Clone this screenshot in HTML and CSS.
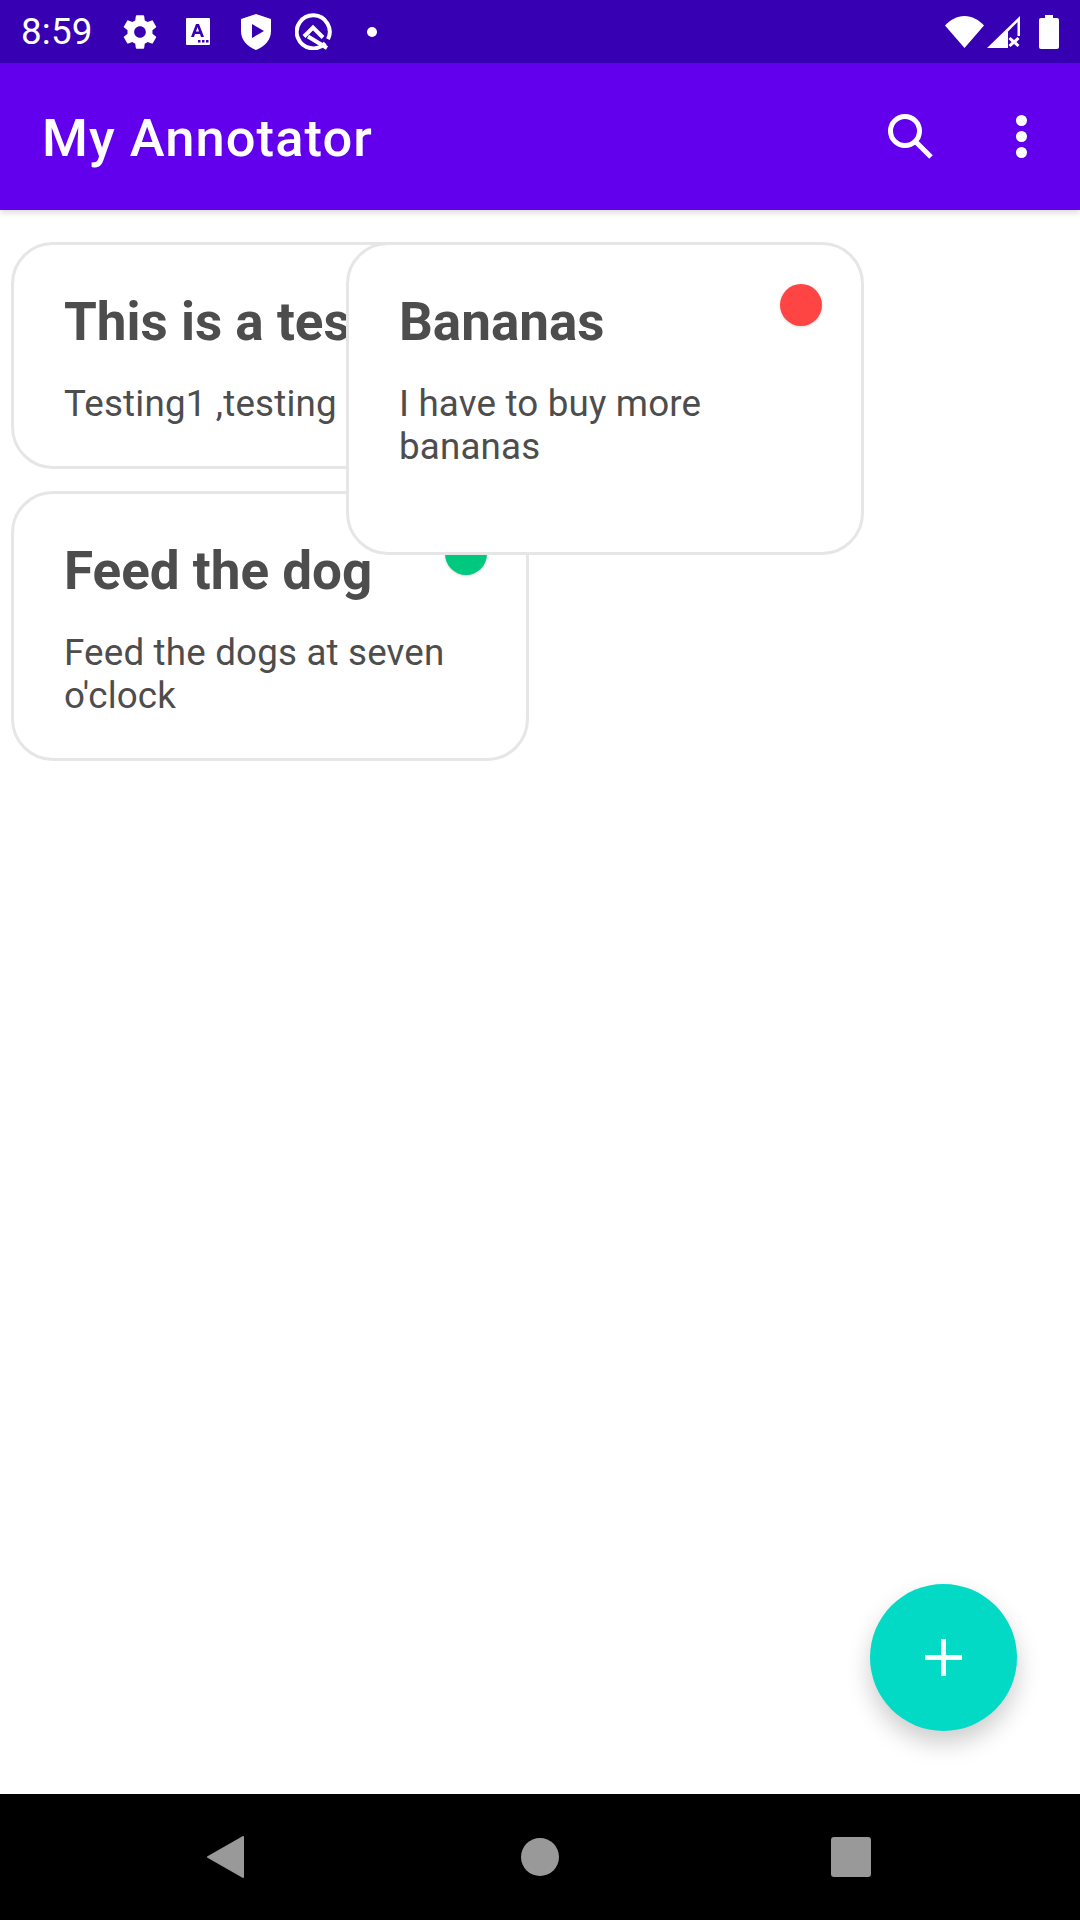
FILE: index.html
```html
<!DOCTYPE html>
<html lang="en">
<head>
  <meta charset="UTF-8">
  <meta name="viewport" content="width=device-width, initial-scale=1.0">
  <title>My Annotator</title>
  <link rel="stylesheet" href="styles.css">
</head>
<body>
<div class="screen">
  <div class="status-bar">
    <span class="clock">8:59</span>
    <div class="status-left">
      <svg class="icon-gear" viewBox="0 0 24 24"><path fill="#fff" fill-rule="evenodd" d="M19.43 12.98c.04-.32.07-.64.07-.98s-.03-.66-.07-.98l2.11-1.65c.19-.15.24-.42.12-.64l-2-3.46c-.12-.22-.39-.3-.61-.22l-2.49 1c-.52-.4-1.08-.73-1.69-.98l-.38-2.65C14.46 2.18 14.25 2 14 2h-4c-.25 0-.46.18-.49.42l-.38 2.65c-.61.25-1.17.59-1.69.98l-2.49-1c-.23-.09-.49 0-.61.22l-2 3.46c-.13.22-.07.49.12.64l2.11 1.65c-.04.32-.07.65-.07.98s.03.66.07.98l-2.11 1.65c-.19.15-.24.42-.12.64l2 3.46c.12.22.39.3.61.22l2.49-1c.52.4 1.08.73 1.69.98l.38 2.65c.03.24.24.42.49.42h4c.25 0 .46-.18.49-.42l.38-2.65c.61-.25 1.17-.59 1.69-.98l2.49 1c.23.09.49 0 .61-.22l2-3.46c.12-.22.07-.49-.12-.64l-2.11-1.65zM12 15.5c-1.93 0-3.5-1.57-3.5-3.5s1.57-3.5 3.5-3.5 3.5 1.57 3.5 3.5-1.57 3.5-3.5 3.5z"/></svg>
      <svg class="icon-card" viewBox="0 0 24 27"><path fill="#fff" fill-rule="evenodd" d="M1 0h22a1 1 0 0 1 1 1v25a1 1 0 0 1-1 1H1a1 1 0 0 1-1-1V1a1 1 0 0 1 1-1zM10 6l-5 13h3l1-3h5l1 3h3L13 6zM10 13.500l1.500-4.500 1.500 4.500zM12 22h2.500v2.500H12zM16 22h2.500v2.500H16zM20 22h2.500v2.500H20z"/></svg>
      <svg class="icon-shield" viewBox="0 0 30 36"><path fill="#fff" fill-rule="evenodd" d="M15 0l15 5v12c0 9-6 15.500-15 19C6 32.500 0 26 0 17V5zM11 10v14l12-7z"/></svg>
      <svg class="icon-q" viewBox="0 0 37 37"><path fill="none" stroke="#fff" stroke-width="4" d="M30.200 30.200A16.500 16.500 0 1 1 33 26.200"/><path fill="none" stroke="#fff" stroke-width="4" d="M9 23.500L18 14.500l10 10M13 23.500L32 35"/></svg>
      <span class="status-dot"></span>
    </div>
    <div class="status-right">
      <svg class="icon-wifi" viewBox="0 0 39 32"><path fill="#fff" d="M19.500 32L0 9.500C5 4 12 0 19.500 0S34 4 39 9.500z"/></svg>
      <svg class="icon-signal" viewBox="0 0 33 32"><path fill="#fff" d="M33 0v20h-2.500V6L21 15.500V32H0z"/><path fill="#fff" d="M23.500 21l3.500 3 3.500-3 2 2-3 3 3 3-2 2-3.500-3-3.500 3-2-2 3-3-3-3z"/></svg>
      <svg class="icon-battery" viewBox="0 0 20 34"><path fill="#fff" d="M6 0h8v3h4a2 2 0 0 1 2 2v27a2 2 0 0 1-2 2H2a2 2 0 0 1-2-2V5a2 2 0 0 1 2-2h4z"/></svg>
    </div>
  </div>

  <div class="app-bar">
    <h1 class="app-title">My Annotator</h1>
    <svg class="icon-search" viewBox="0 0 45 45"><circle cx="17" cy="17" r="14.500" fill="none" stroke="#fff" stroke-width="5"/><path stroke="#fff" stroke-width="5" d="M27.500 27.500L43 43"/></svg>
    <div class="menu-dots"><span></span><span></span><span></span></div>
  </div>

  <div class="content">
    <div class="card card-first">
      <h2 class="card-title">This is a tes</h2>
      <p class="card-text nowrap">Testing1 ,testing</p>
    </div>
    <div class="card card-feed">
      <span class="note-dot green"></span>
      <h2 class="card-title">Feed the dog</h2>
      <p class="card-text">Feed the dogs at seven o'clock</p>
    </div>
    <div class="card card-bananas">
      <span class="note-dot red"></span>
      <h2 class="card-title">Bananas</h2>
      <p class="card-text">I have to buy more bananas</p>
    </div>
    <div class="fab">
      <svg viewBox="0 0 37 37"><path stroke="#fff" stroke-width="5" d="M18.500 0v37M0 18.500h37"/></svg>
    </div>
  </div>

  <div class="nav-bar">
    <svg class="nav-back" viewBox="0 0 37 42"><path fill="#999" stroke="#999" stroke-width="2" stroke-linejoin="round" d="M36 1v40L1 21z"/></svg>
    <span class="nav-home"></span>
    <span class="nav-recent"></span>
  </div>
</div>
</body>
</html>
```

FILE: styles.css
```css
* {
  box-sizing: border-box;
}
body {
  margin: 0;
  font-family: Roboto, "Liberation Sans", sans-serif;
  background-color: #fff;
}
svg {
  display: block;
  flex: none;
}
.screen {
  width: 1080px;
  height: 1920px;
  display: flex;
  flex-direction: column;
  overflow: hidden;
}

/* status bar */
.status-bar {
  height: 63px;
  flex: none;
  display: flex;
  align-items: center;
  padding: 0 21px;
  background-color: #3700b3;
  color: #fff;
}
.clock {
  font-size: 36.75px;
  letter-spacing: 0.2px;
  width: 99px;
  flex: none;
}
.status-left {
  display: flex;
  align-items: center;
  flex: 1;
}
.status-right {
  display: flex;
  align-items: center;
}
.icon-gear {
  width: 40px;
  height: 40px;
  margin-right: 26px;
}
.icon-card {
  width: 24px;
  height: 27px;
  margin-right: 31px;
}
.icon-shield {
  width: 30px;
  height: 36px;
  margin-right: 24px;
}
.icon-q {
  width: 37px;
  height: 37px;
  margin-right: 35px;
}
.status-dot {
  width: 10px;
  height: 10px;
  border-radius: 50%;
  background-color: #fff;
}
.icon-wifi {
  width: 39px;
  height: 32px;
  margin-right: 3px;
}
.icon-signal {
  width: 33px;
  height: 32px;
  margin-right: 19px;
}
.icon-battery {
  width: 20px;
  height: 34px;
}

/* app bar */
.app-bar {
  height: 147px;
  flex: none;
  display: flex;
  align-items: center;
  padding: 0 53px 0 42px;
  background-color: #6200ee;
  box-shadow: 0 3px 6px rgba(0,0,0,0.14);
  position: relative;
}
.app-title {
  flex: 1;
  margin: 2px 0 0;
  color: #fff;
  font-size: 52.5px;
  font-weight: 500;
  letter-spacing: 1.05px;
}
.icon-search {
  width: 45px;
  height: 45px;
  margin-right: 83px;
}
.menu-dots {
  display: flex;
  flex-direction: column;
  gap: 5px;
}
.menu-dots span {
  width: 11px;
  height: 11px;
  border-radius: 50%;
  background-color: #fff;
}

/* notes */
.content {
  flex: 1;
  position: relative;
  padding: 32px 0 0 11px;
  display: flex;
  flex-direction: column;
  gap: 22px;
  align-items: flex-start;
}
.card {
  width: 518px;
  padding: 46px 40px 0 50px;
  background-color: #fff;
  border: 3px solid #e6e6e6;
  border-radius: 42px;
  position: relative;
  flex: none;
}
.card-first {
  height: 227px;
}
.card-feed {
  height: 270px;
}
.card-bananas {
  height: 313px;
  position: absolute;
  top: 32px;
  left: 346px;
}
.card-title {
  margin: 0 0 29px;
  color: #4d4d4d;
  font-size: 53px;
  font-weight: 700;
  line-height: 62px;
  white-space: nowrap;
}
.card-text {
  margin: 0;
  color: #4d4d4d;
  font-size: 36.75px;
  letter-spacing: 0.17px;
  line-height: 43px;
}
.nowrap {
  white-space: nowrap;
}
.note-dot {
  position: absolute;
  top: 39px;
  right: 39px;
  width: 42px;
  height: 42px;
  border-radius: 50%;
  box-shadow: 0 1px 3px rgba(0,0,0,0.15);
}
.red {
  background-color: #ff4444;
}
.green {
  background-color: #00c97f;
}
.fab {
  position: absolute;
  left: 870px;
  top: 1374px;
  width: 147px;
  height: 147px;
  border-radius: 50%;
  background-color: #03dac5;
  box-shadow: 0 12px 24px rgba(0,0,0,0.2);
  display: flex;
  align-items: center;
  justify-content: center;
}
.fab svg {
  width: 37px;
  height: 37px;
}

/* navigation bar */
.nav-bar {
  height: 126px;
  flex: none;
  display: flex;
  align-items: center;
  padding-left: 207px;
  background-color: #000;
}
.nav-back {
  width: 37px;
  height: 42px;
}
.nav-home {
  width: 38px;
  height: 38px;
  margin-left: 277px;
  border-radius: 50%;
  background-color: #999;
}
.nav-recent {
  width: 40px;
  height: 40px;
  margin-left: 272px;
  border-radius: 3px;
  background-color: #999;
}
```
